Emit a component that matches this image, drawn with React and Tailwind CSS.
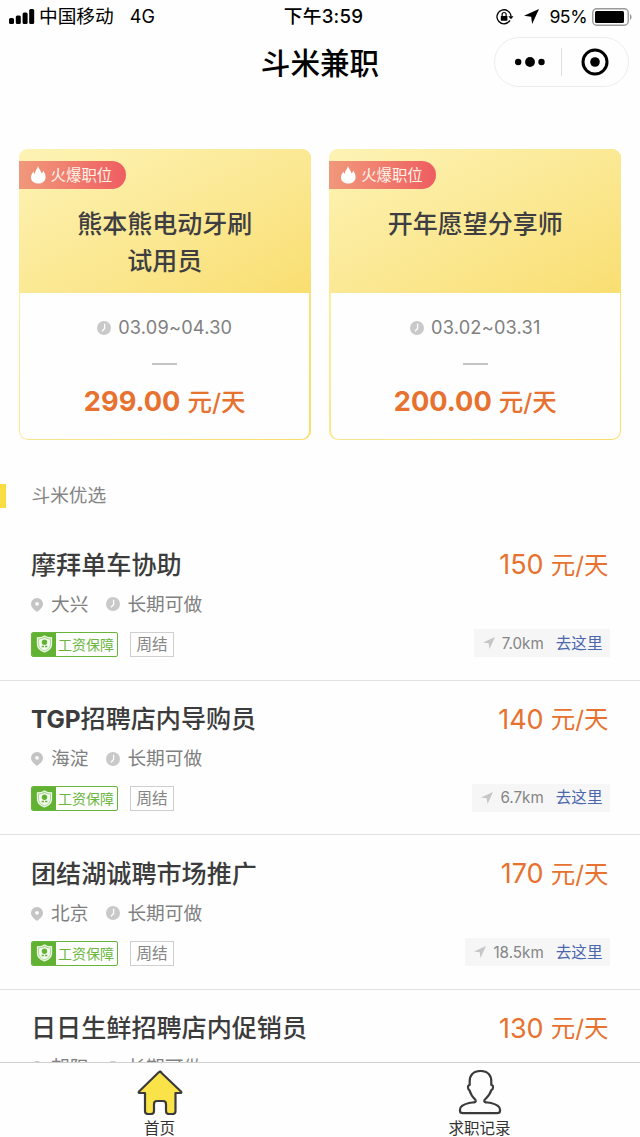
import React from "react";

const hotJobs = [
  { title: ["熊本熊电动牙刷", "试用员"], date: "03.09~04.30", pay: "299.00" },
  { title: ["开年愿望分享师"], date: "03.02~03.31", pay: "200.00" },
];

const jobs = [
  { title: "摩拜单车协助", area: "大兴", pay: "150", distance: "7.0km" },
  { prefix: "TGP", title: "招聘店内导购员", area: "海淀", pay: "140", distance: "6.7km" },
  { title: "团结湖诚聘市场推广", area: "北京", pay: "170", distance: "18.5km" },
  { title: "日日生鲜招聘店内促销员", area: "朝阳", pay: "130", distance: "20.1km" },
];

function Clock() {
  return (
    <svg className="size-[14px] shrink-0" viewBox="0 0 14 14">
      <circle cx="7" cy="7" r="7" fill="#c9c9c9" />
      <path d="M7.600 2.800v4.600L5 10.200" fill="none" stroke="#fff" strokeWidth="1.300" />
    </svg>
  );
}

function Pin() {
  return (
    <svg className="h-[14px] w-[12px] shrink-0" viewBox="0 0 12 14">
      <path d="M6 0a6 6 0 0 1 6 6c0 3.200-3 5.500-6 8-3-2.500-6-4.800-6-8a6 6 0 0 1 6-6Z" fill="#c4c4c4" />
      <circle cx="6" cy="5.800" r="1.900" fill="#fdfdfd" />
    </svg>
  );
}

function Arrow({ className }) {
  return (
    <svg className={className} viewBox="0 0 14 14" fill="currentColor">
      <path d="M14 0 7.600 14 6.700 7.300 0 6.400Z" />
    </svg>
  );
}

function Flame() {
  return (
    <svg className="h-[18px] w-[15px]" viewBox="0 0 15 18" fill="#fff">
      <path d="M7 0C7.500 2.500 10 4.500 10.600 7.500 11.700 6.800 12.100 5.700 12 4.600 13.800 6.800 14.800 9 14.500 12 14.200 15.500 11 17.500 7.300 17.500 3 17.500 0 15 0 11.500 0 9 1.200 7.300 2.600 5.600 2.600 6.800 3 7.600 3.600 8 3.800 5 6.500 3 7 0Z" />
    </svg>
  );
}

function StatusBar() {
  return (
    <div className="grid h-8 grid-cols-[1fr_auto_1fr] items-center pl-[9px] pr-[8px] text-black">
      <div className="flex items-center">
        <svg className="h-[15px] w-[26px]" viewBox="0 0 26 15">
          <rect x="0" y="9" width="5" height="6" rx="1.500" />
          <rect x="6.800" y="6.500" width="5" height="8.500" rx="1.500" />
          <rect x="13.600" y="3.500" width="5" height="11.500" rx="1.500" />
          <rect x="20.200" y="0" width="5" height="15" rx="1.500" />
        </svg>
        <span className="ml-[4px] pt-px text-[18.700px] leading-8">中国移动</span>
        <span className="ml-[16px] pt-px text-[18px] leading-8">4G</span>
      </div>
      <div className="pl-[6px] pt-px text-[18.700px] font-medium leading-8 tracking-[0.2px]">下午3:59</div>
      <div className="flex items-center justify-end">
        <svg className="h-[16px] w-[18px]" viewBox="0 0 18 16">
          <path d="M14 11.400A7 7 0 1 1 15 7.600" fill="none" stroke="#000" strokeWidth="1.300" />
          <path d="M12.300 7.200h5.200L15 10.200Z" />
          <rect x="4.800" y="7" width="6.600" height="4.800" rx=".5" />
          <path d="M6.100 7.200V5.500a2 2 0 0 1 4 0v1.700" fill="none" stroke="#000" strokeWidth="1.200" />
        </svg>
        <Arrow className="ml-[10px] size-[15px]" />
        <span className="ml-[10px] pt-px text-[17.700px] leading-8 tracking-[-0.500px]">95%</span>
        <svg className="ml-[5px] h-[18px] w-[40px]" viewBox="0 0 40 18">
          <rect x=".75" y=".75" width="35.500" height="16.500" rx="4" fill="none" stroke="#999" strokeWidth="1.400" />
          <rect x="3" y="3" width="29" height="12" rx="1.500" />
          <path d="M38 6v6c2-1 2-5 0-6Z" fill="#999" />
        </svg>
      </div>
    </div>
  );
}

function TitleBar() {
  return (
    <header className="grid h-[64px] grid-cols-[1fr_auto_1fr] pr-[11px]">
      <div />
      <h1 className="pl-[11px] pt-[17px] text-[29.600px] font-medium leading-none text-black">斗米兼职</h1>
      <div className="mt-[5px] flex h-[50px] w-[135px] items-center justify-self-end rounded-full border border-[#ededed]">
        <div className="flex w-[66px] justify-center">
          <svg className="ml-[4px] h-[10px] w-[30px]" viewBox="0 0 30 10">
            <circle cx="3.200" cy="5" r="3.200" />
            <circle cx="15" cy="5" r="4.900" />
            <circle cx="26.500" cy="5" r="3.200" />
          </svg>
        </div>
        <div className="h-[28px] w-px bg-[#dedede]" />
        <div className="flex flex-1 justify-center">
          <svg className="size-[28px]" viewBox="0 0 28 28">
            <circle cx="14" cy="14" r="12" fill="none" stroke="#000" strokeWidth="3" />
            <circle cx="14" cy="14" r="4.800" />
          </svg>
        </div>
      </div>
    </header>
  );
}

function HotCard({ job }) {
  return (
    <article className="h-[291px] overflow-hidden rounded-[9px] bg-gradient-to-br from-[#fbf2b3] to-[#f8dd68]">
      <div className="h-[144px] bg-gradient-to-br from-[#fdf3b5] to-[#f9de70] pt-[12px]">
        <div className="flex h-[28px] w-[107px] items-center rounded-r-full bg-gradient-to-r from-[#f0987b] to-[#ee5d61] pl-[12px] text-[15.400px] leading-none text-[#fff3e8]">
          <Flame />
          <span className="ml-[5px] pt-[2px]">火爆职位</span>
        </div>
        <h2 className="pt-[17px] text-center text-[25px] font-medium leading-[37px] text-[#3e3e42]">
          {job.title.map((line) => (
            <span className="block" key={line}>{line}</span>
          ))}
        </h2>
      </div>
      <div className="mx-[1.500px] flex h-[145.500px] flex-col items-center rounded-b-[8px] bg-[#fefefe] pt-[22px]">
        <div className="flex h-[25px] items-center gap-[7px] text-[18.200px] tracking-[0.2px] text-[#808080]">
          <Clock />
          <span className="leading-none">{job.date}</span>
        </div>
        <div className="mt-[23px] h-[1.500px] w-[25px] bg-[#c4c4c4]" />
        <div className="mt-[18px] flex h-[38px] items-center text-[#e7712f]">
          <span className="text-[27.200px] font-bold leading-none">{job.pay}</span>
          <span className="ml-[7px] pt-px text-[24.500px] font-medium leading-none">元/天</span>
        </div>
      </div>
    </article>
  );
}

function Guarantee() {
  return (
    <div className="flex h-[25px] w-[87px] items-center overflow-hidden rounded-[2px] border border-[#68b53b] bg-white">
      <div className="flex h-full w-[24px] shrink-0 items-center justify-center bg-[#61b232]">
        <svg className="h-[18px] w-[17px]" viewBox="0 0 17 18">
          <path d="M8.500 1c2 1.500 4.500 2 7 2v6c0 4-3 6.500-7 8-4-1.500-7-4-7-8V3c2.500 0 5-.5 7-2Z" fill="#a5d488" stroke="#f1f9ec" strokeWidth="1.300" />
          <path d="M8.500 2.800c1.700 1 3.600 1.500 5.500 1.600V9c0 3.200-2.200 5.200-5.500 6.500C5.200 14.200 3 12.200 3 9V4.400c1.900-.1 3.800-.6 5.500-1.600Z" fill="#f4faf0" />
          <circle cx="8.500" cy="7.200" r="2.700" fill="#61b232" />
          <path d="M5.700 11.500h2.200M9.100 11.500h2.200" stroke="#61b232" strokeWidth="1.600" />
        </svg>
      </div>
      <span className="ml-[2px] whitespace-nowrap pt-px text-[14px] leading-none text-[#6ab640]">工资保障</span>
    </div>
  );
}

function JobRow({ job }) {
  return (
    <article className="h-[154.500px] border-b border-[#e2e2e2] pl-[31px] pr-[31.500px] pt-[20px]">
      <div className="flex h-[37px] items-center justify-between">
        <h3 className="pt-[2px] text-[25.100px] font-medium leading-none text-[#3c3c3c]">
          {job.prefix && <span className="text-[24.500px] font-bold tracking-[-0.1px]">{job.prefix}</span>}
          {job.title}
        </h3>
        <div className="flex items-center text-[#e7712f]">
          <span className="text-[27px] leading-none">{job.pay}</span>
          <span className="ml-[7px] pt-px text-[24.500px] leading-none">元/天</span>
        </div>
      </div>
      <div className="mt-[8px] flex h-[27px] items-center text-[18.700px] leading-none text-[#808080]">
        <Pin />
        <span className="ml-[8px] pt-px">{job.area}</span>
        <span className="ml-[18px] flex items-center gap-[7px]">
          <Clock />
          <span className="pt-px">长期可做</span>
        </span>
      </div>
      <div className="mt-[11px] flex h-[28px] items-center">
        <div className="flex items-center pt-[2px]">
          <Guarantee />
          <div className="ml-[12px] flex h-[25px] w-[44px] items-center justify-center border border-[#cfcfcf] pt-px text-[15.600px] leading-none text-[#858585]">周结</div>
        </div>
        <div className="-mr-px ml-auto flex h-[28px] items-center bg-[#f6f6f6] px-[7px] leading-none">
          <Arrow className="ml-[2px] size-[12px] text-[#c6c6c6]" />
          <span className="ml-[7px] pt-px text-[15.200px] text-[#858585]">{job.distance}</span>
          <span className="ml-[12px] pt-px text-[15.600px] text-[#4b67ad]">去这里</span>
        </div>
      </div>
    </article>
  );
}

function TabBar() {
  return (
    <nav className="z-10 grid h-[75px] shrink-0 grid-cols-2 border-t border-[#cfcfcf] bg-[#fefefe] text-[15.500px] leading-none text-[#333]">
      <div className="flex flex-col items-center pr-px pt-[7px]">
        <svg className="h-[45px] w-[46px]" viewBox="0 0 46 45">
          <path d="M23 1.500 44 21.500Q45 23 43 23H38.500V41Q38.500 44 35.500 44H32Q29 44 29 41V34Q29 31 26 31H20Q17 31 17 34V41Q17 44 14 44H11Q8 44 8 41V23H3Q1 23 2 21.500L21.500 2.500Q23 1 24.500 2.500Z" fill="#fae348" stroke="#3b3b3b" strokeWidth="2.200" strokeLinejoin="round" />
        </svg>
        <span className="mt-[6px]">首页</span>
      </div>
      <div className="flex flex-col items-center pr-px pt-[7px]">
        <svg className="h-[45px] w-[44px]" viewBox="0 0 44 45">
          <path d="M22.500 1C15 1 11.500 5.500 11.700 12V15C9.300 15 9.600 19.500 11.500 20.300 12.700 25 14.500 27 17.500 30 18.500 33 15 32 11 33 5 34.500 2 36.500 2 39.500V41Q2 43.200 5 43.200H39Q42 43.200 42 41V39.500C42 36.500 39 34.500 33 33 29 32 25.500 33 26.500 30 29.500 27 32 25 33.200 20.300 35.600 19.500 35.700 15 33.300 15V12C33.500 5.500 30 1 22.500 1Z" fill="none" stroke="#3b3b3b" strokeWidth="2.200" strokeLinejoin="round" />
        </svg>
        <span className="mt-[6px]">求职记录</span>
      </div>
    </nav>
  );
}

export default function App() {
  return (
    <div className="flex h-[1137px] w-[640px] flex-col overflow-hidden bg-[#fefefe] font-['Inter','Noto_Sans_CJK_SC',sans-serif]">
      <StatusBar />
      <TitleBar />
      <main className="min-h-0 flex-1 overflow-hidden pt-[53px]">
        <section className="grid grid-cols-2 gap-[18.400px] pl-[18.600px] pr-[18.600px]">
          {hotJobs.map((job) => <HotCard job={job} key={job.pay} />)}
        </section>
        <div className="mt-[44px] flex h-[24px] items-center">
          <div className="h-full w-[6px] bg-[#fadc43]" />
          <h2 className="ml-[25.500px] pt-px text-[18.700px] leading-none text-[#858585]">斗米优选</h2>
        </div>
        <section className="pt-[18px]">
          {jobs.map((job) => <JobRow job={job} key={job.title} />)}
        </section>
      </main>
      <TabBar />
    </div>
  );
}
